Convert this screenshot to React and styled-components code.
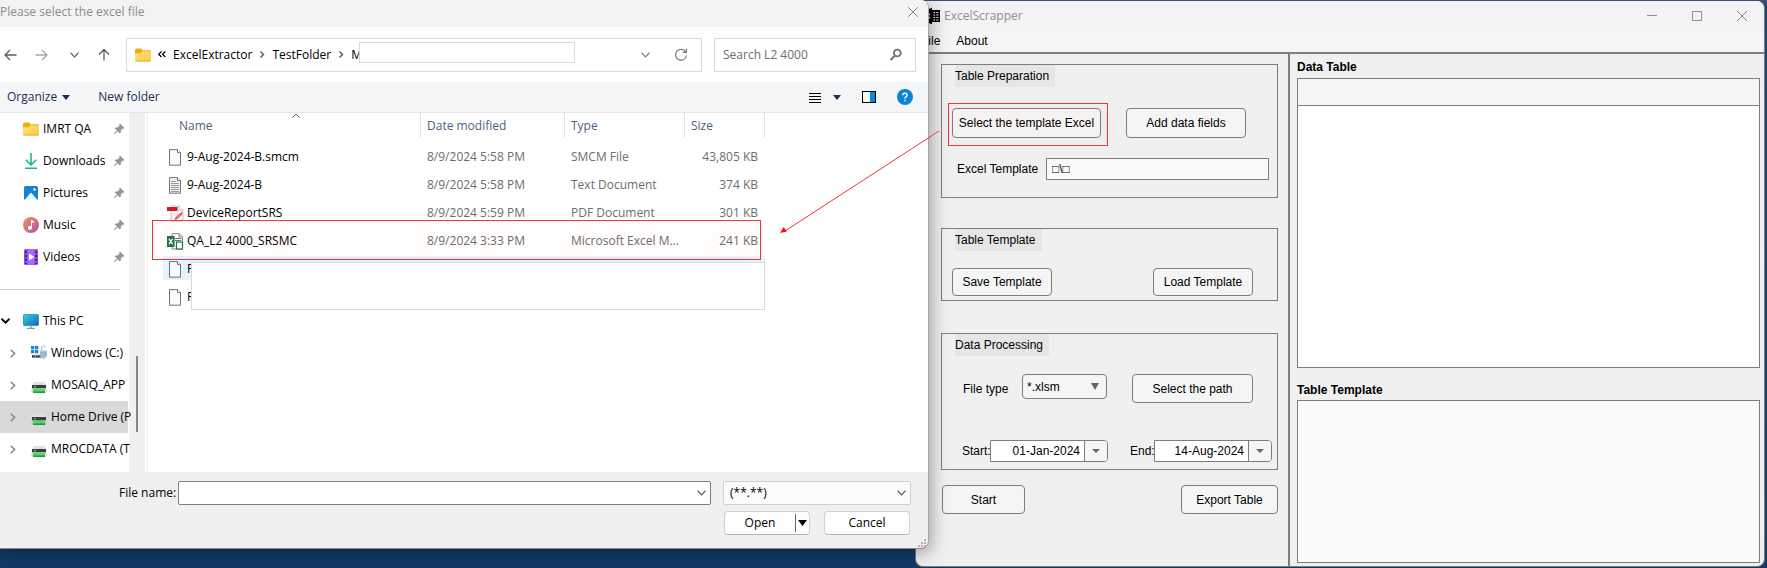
import React from "react";
import styled, { createGlobalStyle, css } from "styled-components";

const ui = `"Open Sans", "Noto Sans", sans-serif`;
const sans = `"Liberation Sans", Arial, sans-serif`;
const line = "#7d7d7d";

const GlobalStyle = createGlobalStyle`
  *, *::before, *::after { box-sizing: border-box; }
  body { margin: 0; }
  button, input, select { font: inherit; color: inherit; margin: 0; }
  svg { display: block; flex: none; }
`;

const Desktop = styled.main`
  display: grid;
  grid-template-columns: minmax(0, 929fr) minmax(0, 838fr);
  align-items: start;
  min-height: 100vh;
  overflow: hidden;
  background: linear-gradient(#3c4f75 0, #1a4577 8px, #123a66 100%);
`;

/* ---------- File dialog ---------- */

const Dialog = styled.section`
  position: relative;
  z-index: 2;
  font: 12px/16px ${ui};
  color: #000;
  background: #f0f0f0;
  border-right: 1px solid #a5a5a5;
  border-bottom: 1px solid #8a8a8a;
  border-radius: 0 8px 8px 0;
  box-shadow: 2px 4px 18px rgba(0, 0, 0, 0.35);
`;

const DialogTitle = styled.header`
  display: flex;
  align-items: flex-start;
  justify-content: space-between;
  height: 27px;
  padding: 4px 9px 0 0;
  background: #f3f3f3;
  border-radius: 0 8px 0 0;
  color: #8c8c8c;
`;

const IconButton = styled.button`
  display: flex;
  align-items: center;
  justify-content: center;
  width: ${(p) => p.$w || 16}px;
  height: 16px;
  padding: 0;
  border: 0;
  background: none;
  color: ${(p) => p.$color || "#5c5c5c"};
`;

const NavBar = styled.nav`
  display: flex;
  align-items: center;
  height: 55px;
  padding: 0 12px 0 2px;
  background: #fff;
`;

const NavButtons = styled.div`
  display: flex;
  justify-content: space-between;
  width: 110px;
  margin-right: 14px;
`;

const AddressBar = styled.div`
  display: flex;
  align-items: center;
  flex: 1;
  height: 34px;
  margin-right: 12px;
  padding: 0 12px 0 8px;
  border: 1px solid #d9d9d9;
`;

const Crumb = styled.a`
  color: inherit;
  text-decoration: none;
  margin-left: ${(p) => p.$gap}px;
`;

const CrumbMask = styled.div`
  flex: 0 1 216px;
  height: 21px;
  margin: 0 auto 4px -3px;
  border: 1px solid #d9d9d9;
  background: #fff;
`;

const CrumbArrow = styled.span`
  display: flex;
  margin-left: 7px;
`;

const AddressTools = styled.div`
  display: flex;
  gap: 20px;
`;

const SearchBox = styled.label`
  display: flex;
  align-items: center;
  width: 202px;
  height: 34px;
  padding: 0 12px 0 8px;
  border: 1px solid #d9d9d9;
  color: #6a6a6a;
`;

const SearchInput = styled.input`
  flex: 1;
  min-width: 0;
  padding: 0;
  border: 0;
  outline: 0;
  background: none;
  &::placeholder { color: #6d6d6d; opacity: 1; }
`;

const Toolbar = styled.div`
  display: flex;
  align-items: center;
  height: 31px;
  padding: 0 4px 0 7px;
  background: #f5f6f8;
  border-bottom: 1px solid #e6e6e6;
  color: #1b2f55;
`;

const ToolButton = styled.button`
  display: flex;
  align-items: center;
  gap: 5px;
  margin-right: 28px;
  padding: 0;
  border: 0;
  background: none;
`;

const ToolIcons = styled.div`
  display: flex;
  align-items: center;
  margin-left: auto;
  color: #000;
`;

const Browser = styled.div`
  display: flex;
  height: 359px;
  background: #fff;
`;

const Sidebar = styled.aside`
  position: relative;
  z-index: 1;
  width: 129px;
  flex: none;
`;

const SideItem = styled.a`
  display: flex;
  align-items: center;
  height: 32px;
  width: 128px;
  padding-left: ${(p) => (p.$child ? 10 : 1)}px;
  white-space: nowrap;
  color: inherit;
  text-decoration: none;
  background: ${(p) => (p.$active ? "#d9d9d9" : "none")};
`;

const Twisty = styled.span`
  display: flex;
  width: ${(p) => (p.$child ? 21 : 22)}px;
  flex: none;
`;

const SideLabel = styled.span`
  flex: 1;
  margin-left: 4px;
`;

const PinSlot = styled.span`
  width: 11px;
  margin-right: 3px;
`;

const SideRule = styled.hr`
  width: 120px;
  margin: 16px 0 15px;
  border: 0;
  border-top: 1px solid #d0d0d0;
`;

const Gutter = styled.div`
  width: 16px;
  padding: 243px 7px 0;
  background: #f0f0f0;
`;

const ScrollThumb = styled.div`
  width: 2px;
  height: 76px;
  background: #858585;
`;

const FileArea = styled.div`
  position: relative;
  flex: 1;
  min-width: 0;
  margin-left: 2px;
  padding-left: 15px;
  border-left: 1px solid #f0f0f0;
`;

const FileTable = styled.table`
  width: 602px;
  table-layout: fixed;
  border-collapse: separate;
  border-spacing: 0;
`;

const HeadCell = styled.th`
  position: relative;
  width: ${(p) => p.$w}px;
  height: 25px;
  padding: 1px 0 0 ${(p) => p.$pad || 6}px;
  border-right: 1px solid #e3e3e3;
  font-weight: 400;
  text-align: left;
  color: #4c5f80;
`;

const SortMark = styled.span`
  position: absolute;
  top: 0;
  left: 129px;
`;

const SpacerRow = styled.tr`
  height: 5px;
`;

const FileRow = styled.tr`
  height: 28px;
  ${(p) =>
    p.$hover &&
    css`
      background: linear-gradient(#e5f3ff, #e5f3ff) 0 1px / 100% 24px no-repeat;
    `}
`;

const Cell = styled.td`
  padding: 0 7px 0 6px;
  color: #6d6d6d;
  white-space: nowrap;
  text-align: ${(p) => (p.$right ? "right" : "left")};
`;

const NameCell = styled(Cell)`
  padding-left: 4px;
  color: #000;
`;

const FileName = styled.div`
  display: flex;
  align-items: center;
  gap: 3px;
`;

const Highlight = styled.div`
  position: absolute;
  top: ${(p) => p.$top}px;
  left: ${(p) => p.$left}px;
  width: ${(p) => p.$w}px;
  height: ${(p) => p.$h}px;
  border: 1px solid #e8383d;
  background: rgba(255, 0, 30, 0.01);
  pointer-events: none;
`;

const FileMask = styled.div`
  position: absolute;
  top: 149px;
  left: 43px;
  width: 574px;
  height: 48px;
  border: 1px solid #d9d9d9;
  background: #fff;
`;

const DialogFooter = styled.footer`
  position: relative;
  display: grid;
  grid-template-columns: 1fr 188px;
  column-gap: 12px;
  row-gap: 6px;
  padding: 9px 17px 13px 119px;
`;

const FileNameField = styled.label`
  display: flex;
  align-items: center;
  gap: 2px;
  white-space: nowrap;
`;

const ComboBox = styled.span`
  display: flex;
  align-items: center;
  flex: 1;
  height: 24px;
  padding: 0 4px 0 6px;
  border: 1px solid ${(p) => (p.$soft ? "#cfcfcf" : "#7f7f7f")};
  border-radius: 2px;
  background: ${(p) => (p.$soft ? "#fbfbfb" : "#fff")};
`;

const ComboInput = styled.input`
  flex: 1;
  min-width: 0;
  padding: 0;
  border: 0;
  outline: 0;
  background: none;
`;

const PlainSelect = styled.select`
  flex: 1;
  min-width: 0;
  padding: 0;
  border: 0;
  outline: 0;
  appearance: none;
  background: none;
`;

const DialogActions = styled.div`
  grid-column: 2;
  display: flex;
  justify-content: space-between;
  padding: 0 1px;
`;

const Action = styled.button`
  display: flex;
  align-items: center;
  justify-content: center;
  width: 86px;
  height: 24px;
  padding: 0;
  border: 1px solid #d0d0d0;
  border-bottom-color: #b5b5b5;
  border-radius: 4px;
  background: #fdfdfd;
`;

const SplitAction = styled.div`
  display: flex;
  width: 86px;
  height: 24px;
  border: 1px solid #d0d0d0;
  border-bottom-color: #b5b5b5;
  border-radius: 4px;
  background: #fdfdfd;
`;

const SplitMain = styled.button`
  flex: 1;
  padding: 0;
  border: 0;
  background: none;
`;

const SplitMenu = styled.button`
  display: flex;
  align-items: center;
  justify-content: center;
  width: 14px;
  margin: 2px 0;
  padding: 0;
  border: 0;
  border-left: 1px solid #666;
  background: none;
`;

const Grip = styled.svg`
  position: absolute;
  right: 2px;
  bottom: 1px;
`;

const PointerArrow = styled.svg`
  position: absolute;
  right: -12px;
  top: 130px;
  pointer-events: none;
`;

/* ---------- Application window ---------- */

const AppWindow = styled.section`
  display: flex;
  flex-direction: column;
  min-height: calc(100vh - 2px);
  margin: 1px 2px 1px -14px;
  font: 12px/16px ${sans};
  color: #000;
  background: #f0f0f0;
  border: 1px solid ${line};
  border-top: 0;
  border-radius: 8px;
  overflow: hidden;
`;

const AppTitle = styled.header`
  display: flex;
  align-items: center;
  height: 30px;
  padding: 0 14px 0 8px;
  background: #f3f3f3;
  font-family: ${ui};
  color: #8f8f8f;
`;

const AppName = styled.span`
  margin-left: 4px;
`;

const WindowButtons = styled.div`
  display: flex;
  gap: 29px;
  margin-left: auto;
`;

const MenuBar = styled.nav`
  display: flex;
  gap: 16px;
  height: 23px;
  padding: 2px 0 0 5px;
  background: #f5f5f5;
  border-bottom: 2px solid ${line};
`;

const MenuItem = styled.button`
  height: 16px;
  padding: 0;
  border: 0;
  background: none;
`;

const AppBody = styled.div`
  display: flex;
  flex: 1;
`;

const Controls = styled.div`
  width: 374px;
  padding: 10px 10px 0 25px;
  border-right: 2px solid ${line};
  flex: none;
`;

const Panel = styled.section`
  position: relative;
  margin-bottom: ${(p) => p.$after}px;
  padding: 0 5px ${(p) => p.$bottom}px 10px;
  border: 1px solid ${line};
`;

const PanelTitle = styled.h2`
  width: fit-content;
  height: 22px;
  margin: 0 0 ${(p) => p.$after}px 3px;
  padding: 3px 6px 0 0;
  background: #e6e6e6;
  font: 12px/16px ${sans};
`;

const FormRow = styled.div`
  display: flex;
  align-items: center;
  justify-content: ${(p) => (p.$between ? "space-between" : "flex-start")};
  gap: ${(p) => p.$gap || 0}px;
  margin-bottom: ${(p) => p.$after || 0}px;
  padding: 0 ${(p) => p.$right || 0}px 0 ${(p) => p.$left || 0}px;
`;

const Button = styled.button`
  width: ${(p) => p.$w}px;
  height: ${(p) => p.$h || 29}px;
  padding: 0;
  border: 1px solid ${line};
  border-radius: 4px;
  background: #f5f5f5;
  white-space: nowrap;
`;

const TextLabel = styled.label`
  width: ${(p) => p.$w}px;
  flex: none;
  white-space: nowrap;
`;

const TextField = styled.input`
  flex: 1;
  min-width: 0;
  height: 22px;
  padding: 0 5px;
  border: 1px solid ${line};
  outline: 0;
  background: #fafafa;
`;

const TypeSelect = styled.span`
  display: flex;
  align-items: center;
  align-self: flex-start;
  width: 85px;
  height: 25px;
  padding: 0 7px 0 4px;
  border: 1px solid ${line};
  border-radius: 4px;
  background: #f5f5f5;
`;

const DateField = styled.span`
  display: flex;
  flex: none;
  width: 118px;
  height: 22px;
  border: 1px solid ${line};
  border-radius: 0 4px 4px 0;
  background: #fff;
  overflow: hidden;
`;

const DateInput = styled.input`
  flex: 1;
  min-width: 0;
  padding: 0 4px 0 0;
  border: 0;
  outline: 0;
  background: none;
  text-align: right;
`;

const DateButton = styled.button`
  display: flex;
  align-items: center;
  justify-content: center;
  width: 23px;
  padding: 0;
  border: 0;
  border-left: 1px solid ${line};
  background: #f5f5f5;
`;

const Output = styled.div`
  display: flex;
  flex-direction: column;
  flex: 1;
  min-width: 0;
  padding: 5px 4px 3px 7px;
`;

const OutputTitle = styled.h2`
  margin: 0 0 ${(p) => p.$after}px;
  font: bold 12px/16px ${sans};
`;

const DataTable = styled.table`
  width: 100%;
  height: 290px;
  margin-bottom: 14px;
  border: 1px solid ${line};
  border-collapse: separate;
  border-spacing: 0;
  background: #fff;
`;

const DataHead = styled.th`
  height: 27px;
  padding: 0;
  background: #f5f5f5;
  border-bottom: 1px solid ${line};
`;

const TemplateBox = styled.div`
  flex: 1;
  min-height: 162px;
  border: 1px solid ${line};
  background: #fafafa;
`;

/* ---------- Icons ---------- */

const Stroke = ({ w = 12, h = 12, d, width = 1, ...rest }) => (
  <svg width={w} height={h} viewBox={`0 0 ${w} ${h}`} fill="none" stroke="currentColor" strokeWidth={width} {...rest}>
    <path d={d} />
  </svg>
);

const CloseIcon = () => <Stroke w={12} h={12} d="M1 1L11 11M11 1L1 11" />;
const Down = ({ color }) => <Stroke w={9} h={6} width={1.2} d="M.5 .7L4.5 4.9L8.5 .7" color={color} />;
const Right = ({ color = "#8a8a8a" }) => <Stroke w={6} h={9} width={1.6} d="M.8 .7L4.6 4.5L.8 8.3" color={color} />;
const SmallRight = () => <Stroke w={6} h={9} width={1.4} d="M1.5 1.5L4.5 4.5L1.5 7.5" color="#555" />;
const Triangle = ({ w = 8, h = 5, fill = "#1b2f55" }) => (
  <svg width={w} height={h} viewBox="0 0 8 5" preserveAspectRatio="none"><path d="M0 0H8L4 5Z" fill={fill} /></svg>
);

const Folder = () => (
  <svg width="16" height="16" viewBox="0 0 16 16">
    <defs><linearGradient id="fold" x2="1" y2="1"><stop stopColor="#ffe391" /><stop offset="1" stopColor="#ffc83d" /></linearGradient></defs>
    <path d="M0 3Q0 1.5 1.5 1.5H6L7.5 3.2H14.5Q16 3.2 16 4.5V8H0Z" fill="#f0ac09" />
    <path d="M0 6.2H5.8L7.5 4.2H16V13Q16 14.5 14.5 14.5H1.5Q0 14.5 0 13Z" fill="url(#fold)" />
    <path d="M.5 14H15.5" stroke="#eeb22c" />
  </svg>
);

const Pin = () => (
  <svg width="11" height="12" viewBox="0 0 11 12">
    <path d="M6 .5L10.5 5L9.5 6L8.7 5.6L6.7 7.7L6.8 9.5L5.8 10.4L3.6 8.2L.8 11H0V10.3L2.8 7.4L.8 5.3L1.7 4.4L3.5 4.5L5.6 2.5L5.1 1.4Z" fill="#8d989f" />
  </svg>
);

const Downloads = () => (
  <svg width="16" height="16" viewBox="0 0 16 16" fill="none" stroke="#16b18d" strokeWidth="1.5">
    <path d="M8 0V12M2.8 6.8L8 12L13.2 6.8M2 15.2H14" />
  </svg>
);

const Pictures = () => (
  <svg width="16" height="16" viewBox="0 0 16 16">
    <rect x="1" y="1" width="14" height="14" rx="1.5" fill="#1582d4" />
    <path d="M1.5 15L8 7.5L14.5 15Z" fill="#eef8ff" />
    <circle cx="11.5" cy="4.5" r="1.2" fill="#fff" />
  </svg>
);

const Music = () => (
  <svg width="16" height="16" viewBox="0 0 16 16">
    <defs><linearGradient id="mus" x2="1" y2="1"><stop stopColor="#f3934f" /><stop offset="1" stopColor="#a854b0" /></linearGradient></defs>
    <circle cx="8" cy="8" r="8" fill="url(#mus)" />
    <path d="M8 3L11 4.2V6L9 5.3V11A2 1.9 0 1 1 8 9.2Z" fill="#fff" />
  </svg>
);

const Videos = () => (
  <svg width="16" height="16" viewBox="0 0 16 16">
    <rect x="1" y="0" width="14" height="16" rx="1.5" fill="#8f48e0" />
    <rect x="4.5" y="0" width="7" height="16" fill="#a56bf0" />
    <path d="M6 4.5L11.5 8L6 11.5Z" fill="#fff" />
    <path d="M2.8 2V15M13.2 2V15" stroke="#3e1780" strokeWidth="1.6" strokeDasharray="2 2" />
  </svg>
);

const Computer = () => (
  <svg width="16" height="16" viewBox="0 0 16 16">
    <defs><linearGradient id="pc" x2="1" y2="1"><stop stopColor="#35d6e0" /><stop offset="1" stopColor="#0f62b8" /></linearGradient></defs>
    <rect x=".4" y="1.4" width="15.2" height="11.2" rx="1" fill="url(#pc)" stroke="#2287b4" strokeWidth=".8" />
    <path d="M8 13V15M4 15.4H12" stroke="#8e979d" strokeWidth="1.2" />
  </svg>
);

const WindowsDrive = () => (
  <svg width="16" height="16" viewBox="0 0 16 16">
    <path d="M0 1H3.3V4.3H0ZM4 1H7.3V4.3H4ZM0 5H3.3V8.3H0ZM4 5H7.3V8.3H4Z" fill="#1684d8" />
    <path d="M1 10H13V12.6H1Z" fill="#3a3a3a" />
    <path d="M3 9.4H11V10.4H2Z" fill="#c9c9c9" />
    <path d="M3.5 11.3H5" stroke="#59d964" />
    <path d="M10.6 6V3Q10.6 1 12.6 1Q14.3 1 14.4 2.6" fill="none" stroke="#b9c2c9" strokeWidth="1.2" />
    <path d="M9 5.6H16V11Q15.5 13 12.5 14Q9.5 13 9 11Z" fill="#a9c4d8" />
    <path d="M9 8H16M9 10.2H16" stroke="#7c9cb5" strokeWidth=".6" />
  </svg>
);

const NetDrive = () => (
  <svg width="16" height="16" viewBox="0 0 16 16">
    <path d="M3 5H13L15 8H1Z" fill="#dfe2e5" />
    <rect x="1" y="8" width="14" height="3.4" fill="#3b3f3f" />
    <path d="M3 9.7H5" stroke="#58e267" />
    <path d="M1.8 12H14.2V15.5Q14.2 16 13.7 16H2.3Q1.8 16 1.8 15.5Z" fill="#45df5b" />
    <path d="M2 15.2H14" stroke="#149447" strokeWidth="1.4" />
    <path d="M0 13.7H1.8M14.2 13.7H16" stroke="#b8bcbf" />
  </svg>
);

const Page = ({ lines }) => (
  <svg width="17" height="17" viewBox="0 0 17 17">
    <path d="M2.5 .6H10.5L13.5 3.6V16.2H2.5Z" fill={lines ? "#f1f1f1" : "#fafafa"} stroke="#737373" />
    <path d="M10.5 .6V3.6H13.5" fill="#fff" stroke="#737373" />
    {lines && <path d="M4 4.5H9M4 6.5H12M4 8.5H12M4 10.5H12M4 12.5H12M4 14.5H12" stroke="#9a9a9a" />}
  </svg>
);

const Pdf = () => (
  <svg width="17" height="17" viewBox="0 0 17 17">
    <path d="M4 1H12L16 5V16H4Z" fill="#f2f2f2" stroke="#b6b6b6" strokeWidth=".8" />
    <path d="M12 1V5H16" fill="#fff" stroke="#b6b6b6" strokeWidth=".8" />
    <rect x="0" y="2" width="10.5" height="4" fill="#d71920" />
    <path d="M7.5 14.5Q9 10.5 15.5 7Q15.5 9.8 11 13.2Q9 14.8 7.5 14.5Z" fill="#d8343a" />
    <path d="M9.5 12.8L13.6 9.6" stroke="#fff" strokeWidth=".6" />
  </svg>
);

const ExcelFile = () => (
  <svg width="17" height="17" viewBox="0 0 17 17">
    <path d="M5 .6H12L15.5 4V16H5Z" fill="#fff" stroke="#7a7a7a" strokeWidth=".9" />
    <path d="M12 .6V4H15.5" fill="none" stroke="#7a7a7a" strokeWidth=".9" />
    <path d="M8 5.5H14M8 7.5H14" stroke="#2f7d53" strokeWidth=".9" />
    <rect x="9.5" y="9" width="6" height="7" fill="#fff" stroke="#1f7446" strokeWidth="1.2" />
    <rect x="0" y="3" width="7.6" height="11" fill="#1f7446" />
    <path d="M2 5.8L5.6 11.2M5.6 5.8L2 11.2" stroke="#fff" strokeWidth="1.3" />
  </svg>
);

const AppIcon = () => (
  <svg width="16" height="16" viewBox="0 0 16 16">
    <path d="M0 2L8 0V16L0 14Z" /><path d="M8 2H16V14H8Z" />
    <path d="M2 5.5L6 10.5M6 5.5L2 10.5" stroke="#fff" strokeWidth="1.2" />
    <path d="M9.3 4.5H11.3M12.3 4.5H14.5M9.3 7H11.3M12.3 7H14.5M9.3 9.5H11.3M12.3 9.5H14.5M9.3 12H11.3M12.3 12H14.5" stroke="#e8e8e8" />
  </svg>
);

/* ---------- Content ---------- */

const quickAccess = [
  ["IMRT QA", Folder],
  ["Downloads", Downloads],
  ["Pictures", Pictures],
  ["Music", Music],
  ["Videos", Videos],
];

const drives = [
  ["Windows (C:)", WindowsDrive],
  ["MOSAIQ_APP", NetDrive],
  ["Home Drive (P", NetDrive, true],
  ["MROCDATA (T", NetDrive],
];

const files = [
  { name: "9-Aug-2024-B.smcm", date: "8/9/2024 5:58 PM", type: "SMCM File", size: "43,805 KB", icon: <Page /> },
  { name: "9-Aug-2024-B", date: "8/9/2024 5:58 PM", type: "Text Document", size: "374 KB", icon: <Page lines /> },
  { name: "DeviceReportSRS", date: "8/9/2024 5:59 PM", type: "PDF Document", size: "301 KB", icon: <Pdf /> },
  { name: "QA_L2 4000_SRSMC", date: "8/9/2024 3:33 PM", type: "Microsoft Excel M...", size: "241 KB", icon: <ExcelFile /> },
  { name: "F", icon: <Page />, hover: true },
  { name: "F", icon: <Page /> },
];

function FileDialog() {
  return (
    <Dialog aria-label="Please select the excel file">
      <DialogTitle>
        Please select the excel file
        <IconButton $w={12} $color="#8c8c8c" aria-label="Close"><CloseIcon /></IconButton>
      </DialogTitle>
      <NavBar>
        <NavButtons>
          <IconButton aria-label="Back"><Stroke w={14} h={12} width={1.3} d="M13.5 6H2M7 1L2 6L7 11" /></IconButton>
          <IconButton $w={22} aria-label="Forward" $color="#a8a8a8"><Stroke w={14} h={12} width={1.3} d="M.5 6H12M7 1L12 6L7 11" /></IconButton>
          <IconButton aria-label="Recent"><Down /></IconButton>
          <IconButton aria-label="Up"><Stroke w={12} h={13} width={1.3} d="M6 12.5V1.5M1 6.5L6 1.5L11 6.5" /></IconButton>
        </NavButtons>
        <AddressBar>
          <Folder />
          <CrumbArrow><Stroke w={8} h={7} width={1.2} d="M3.5 .5L.7 3.3L3.5 6M7.3 .5L4.5 3.3L7.3 6" /></CrumbArrow>
          <Crumb href="#" $gap={7}>ExcelExtractor</Crumb>
          <CrumbArrow><SmallRight /></CrumbArrow>
          <Crumb href="#" $gap={7}>TestFolder</Crumb>
          <CrumbArrow><SmallRight /></CrumbArrow>
          <Crumb href="#" $gap={7}>M</Crumb>
          <CrumbMask />
          <AddressTools>
            <IconButton aria-label="Locations" $color="#777"><Down /></IconButton>
            <IconButton aria-label="Refresh" $color="#777">
              <Stroke w={14} h={14} width={1.2} d="M11.8 4A5.5 5.5 0 1 0 12.5 7.5M12.4 .8V4.3H8.8" />
            </IconButton>
          </AddressTools>
        </AddressBar>
        <SearchBox>
          <SearchInput type="text" placeholder="Search L2 4000" aria-label="Search L2 4000" />
          <svg width="14" height="14" viewBox="0 0 14 14" fill="none" stroke="#6e6e6e">
            <circle cx="8.3" cy="5" r="3.4" strokeWidth="1.8" /><path d="M6 7.5L1.5 12" strokeWidth="2" />
          </svg>
        </SearchBox>
      </NavBar>
      <Toolbar>
        <ToolButton>Organize <Triangle /></ToolButton>
        <ToolButton>New folder</ToolButton>
        <ToolIcons>
          <IconButton $w={14} $color="#000" aria-label="View"><Stroke w={12} h={11} d="M0 1.5H12M0 4.5H12M0 7.5H12M0 10.5H12" /></IconButton>
          <IconButton $w={30} aria-label="View options"><Triangle /></IconButton>
          <IconButton $w={34} aria-label="Preview pane">
            <svg width="14" height="12" viewBox="0 0 14 12"><rect x=".5" y=".5" width="13" height="11" fill="#fff" stroke="#000" /><rect x="8" y="1" width="5" height="10" fill="#1285d8" /></svg>
          </IconButton>
          <IconButton $w={38} aria-label="Help">
            <svg width="16" height="16" viewBox="0 0 16 16"><circle cx="8" cy="8" r="8" fill="#0d83d6" /><path d="M5.8 6.3Q5.8 4.3 8 4.3Q10.1 4.3 10.1 6.1Q10.1 7.1 9 7.8Q8 8.4 8 9.5M8 10.7V12.2" fill="none" stroke="#fff" strokeWidth="1.4" /></svg>
          </IconButton>
        </ToolIcons>
      </Toolbar>
      <Browser>
        <Sidebar>
          {quickAccess.map(([name, Icon]) => (
            <SideItem href="#" key={name}>
              <Twisty /><Icon /><SideLabel>{name}</SideLabel><PinSlot><Pin /></PinSlot>
            </SideItem>
          ))}
          <SideRule />
          <SideItem href="#">
            <Twisty><Stroke w={9} h={6} width={1.7} d="M.5 .7L4.5 4.7L8.5 .7" /></Twisty>
            <Computer /><SideLabel>This PC</SideLabel>
          </SideItem>
          {drives.map(([name, Icon, active]) => (
            <SideItem href="#" key={name} $child $active={active}>
              <Twisty $child><Right /></Twisty><Icon /><SideLabel>{name}</SideLabel>
            </SideItem>
          ))}
        </Sidebar>
        <Gutter><ScrollThumb /></Gutter>
        <FileArea>
          <FileTable>
            <thead>
              <tr>
                <HeadCell $w={258} $pad={16}>Name<SortMark><Stroke w={8} h={5} d="M.5 4.5L4 1L7.5 4.5" /></SortMark></HeadCell>
                <HeadCell $w={144}>Date modified</HeadCell>
                <HeadCell $w={120}>Type</HeadCell>
                <HeadCell $w={80}>Size</HeadCell>
              </tr>
            </thead>
            <tbody>
              <SpacerRow aria-hidden="true" />
              {files.map((f, i) => (
                <FileRow key={i} $hover={f.hover}>
                  <NameCell><FileName>{f.icon}{f.name}</FileName></NameCell>
                  <Cell>{f.date}</Cell>
                  <Cell>{f.type}</Cell>
                  <Cell $right>{f.size}</Cell>
                </FileRow>
              ))}
            </tbody>
          </FileTable>
          <FileMask />
          <Highlight $top={107} $left={4} $w={609} $h={40} />
        </FileArea>
      </Browser>
      <DialogFooter>
        <FileNameField>
          File name:
          <ComboBox><ComboInput type="text" /><Down color="#555" /></ComboBox>
        </FileNameField>
        <ComboBox $soft>
          <PlainSelect aria-label="File type filter"><option>(**.**)</option></PlainSelect>
          <Down color="#555" />
        </ComboBox>
        <DialogActions>
          <SplitAction>
            <SplitMain>Open</SplitMain>
            <SplitMenu aria-label="Open options"><Triangle w={9} h={6} fill="#000" /></SplitMenu>
          </SplitAction>
          <Action>Cancel</Action>
        </DialogActions>
        <Grip width="8" height="8" viewBox="0 0 8 8" fill="#b5b5b5">
          <path d="M6 0H8V2H6ZM6 3H8V5H6ZM3 3H5V5H3ZM6 6H8V8H6ZM3 6H5V8H3ZM0 6H2V8H0Z" />
        </Grip>
      </DialogFooter>
      <PointerArrow width="160" height="104" viewBox="0 0 160 104">
        <path d="M159 1L5 101" stroke="#e8383d" />
        <path d="M0 103L3.5 97L7 101.5Z" fill="#e3171d" />
      </PointerArrow>
    </Dialog>
  );
}

function DateBox({ id, value }) {
  return (
    <DateField>
      <DateInput id={id} type="text" defaultValue={value} />
      <DateButton aria-label="Open calendar"><Triangle w={8} h={4} fill="#666" /></DateButton>
    </DateField>
  );
}

function ExcelScrapper() {
  return (
    <AppWindow aria-label="ExcelScrapper">
      <AppTitle>
        <AppIcon />
        <AppName>ExcelScrapper</AppName>
        <WindowButtons>
          <IconButton $color="#8f8f8f" aria-label="Minimize"><Stroke w={10} h={2} d="M0 .5H10" /></IconButton>
          <IconButton $color="#8f8f8f" aria-label="Maximize"><Stroke w={10} h={10} d="M.5 .5H9.5V9.5H.5Z" /></IconButton>
          <IconButton $color="#8f8f8f" aria-label="Close"><CloseIcon /></IconButton>
        </WindowButtons>
      </AppTitle>
      <MenuBar>
        <MenuItem>File</MenuItem>
        <MenuItem>About</MenuItem>
      </MenuBar>
      <AppBody>
        <Controls>
          <Panel $after={30} $bottom={17}>
            <PanelTitle $after={21}>Table Preparation</PanelTitle>
            <FormRow $gap={25} $after={20}>
              <Button $w={149} $h={30}>Select the template Excel</Button>
              <Button $w={120} $h={30}>Add data fields</Button>
            </FormRow>
            <FormRow $left={5} $right={3}>
              <TextLabel htmlFor="template" $w={89}>Excel Template</TextLabel>
              <TextField id="template" type="text" defaultValue="□\□" />
            </FormRow>
            <Highlight $top={38} $left={6} $w={160} $h={43} />
          </Panel>
          <Panel $after={32} $bottom={4}>
            <PanelTitle $after={17}>Table Template</PanelTitle>
            <FormRow $between $right={19}>
              <Button $w={100} $h={28}>Save Template</Button>
              <Button $w={100} $h={28}>Load Template</Button>
            </FormRow>
          </Panel>
          <Panel $after={15} $bottom={7}>
            <PanelTitle $after={18}>Data Processing</PanelTitle>
            <FormRow $left={11} $after={37}>
              <TextLabel htmlFor="filetype" $w={59}>File type</TextLabel>
              <TypeSelect>
                <PlainSelect id="filetype"><option>*.xlsm</option></PlainSelect>
                <Triangle w={8} h={7} fill="#666" />
              </TypeSelect>
              <FormRow $left={25}><Button $w={121}>Select the path</Button></FormRow>
            </FormRow>
            <FormRow $left={10}>
              <TextLabel htmlFor="start" $w={28}>Start:</TextLabel>
              <DateBox id="start" value="01-Jan-2024" />
              <FormRow $left={22}>
                <TextLabel htmlFor="end" $w={24}>End:</TextLabel>
                <DateBox id="end" value="14-Aug-2024" />
              </FormRow>
            </FormRow>
          </Panel>
          <FormRow $between $left={1}>
            <Button $w={83}>Start</Button>
            <Button $w={97}>Export Table</Button>
          </FormRow>
        </Controls>
        <Output>
          <OutputTitle $after={3}>Data Table</OutputTitle>
          <DataTable>
            <thead><tr><DataHead scope="col" aria-label="Column" /></tr></thead>
            <tbody><tr><td /></tr></tbody>
          </DataTable>
          <OutputTitle $after={2}>Table Template</OutputTitle>
          <TemplateBox />
        </Output>
      </AppBody>
    </AppWindow>
  );
}

export default function App() {
  return (
    <>
      <GlobalStyle />
      <Desktop>
        <FileDialog />
        <ExcelScrapper />
      </Desktop>
    </>
  );
}
